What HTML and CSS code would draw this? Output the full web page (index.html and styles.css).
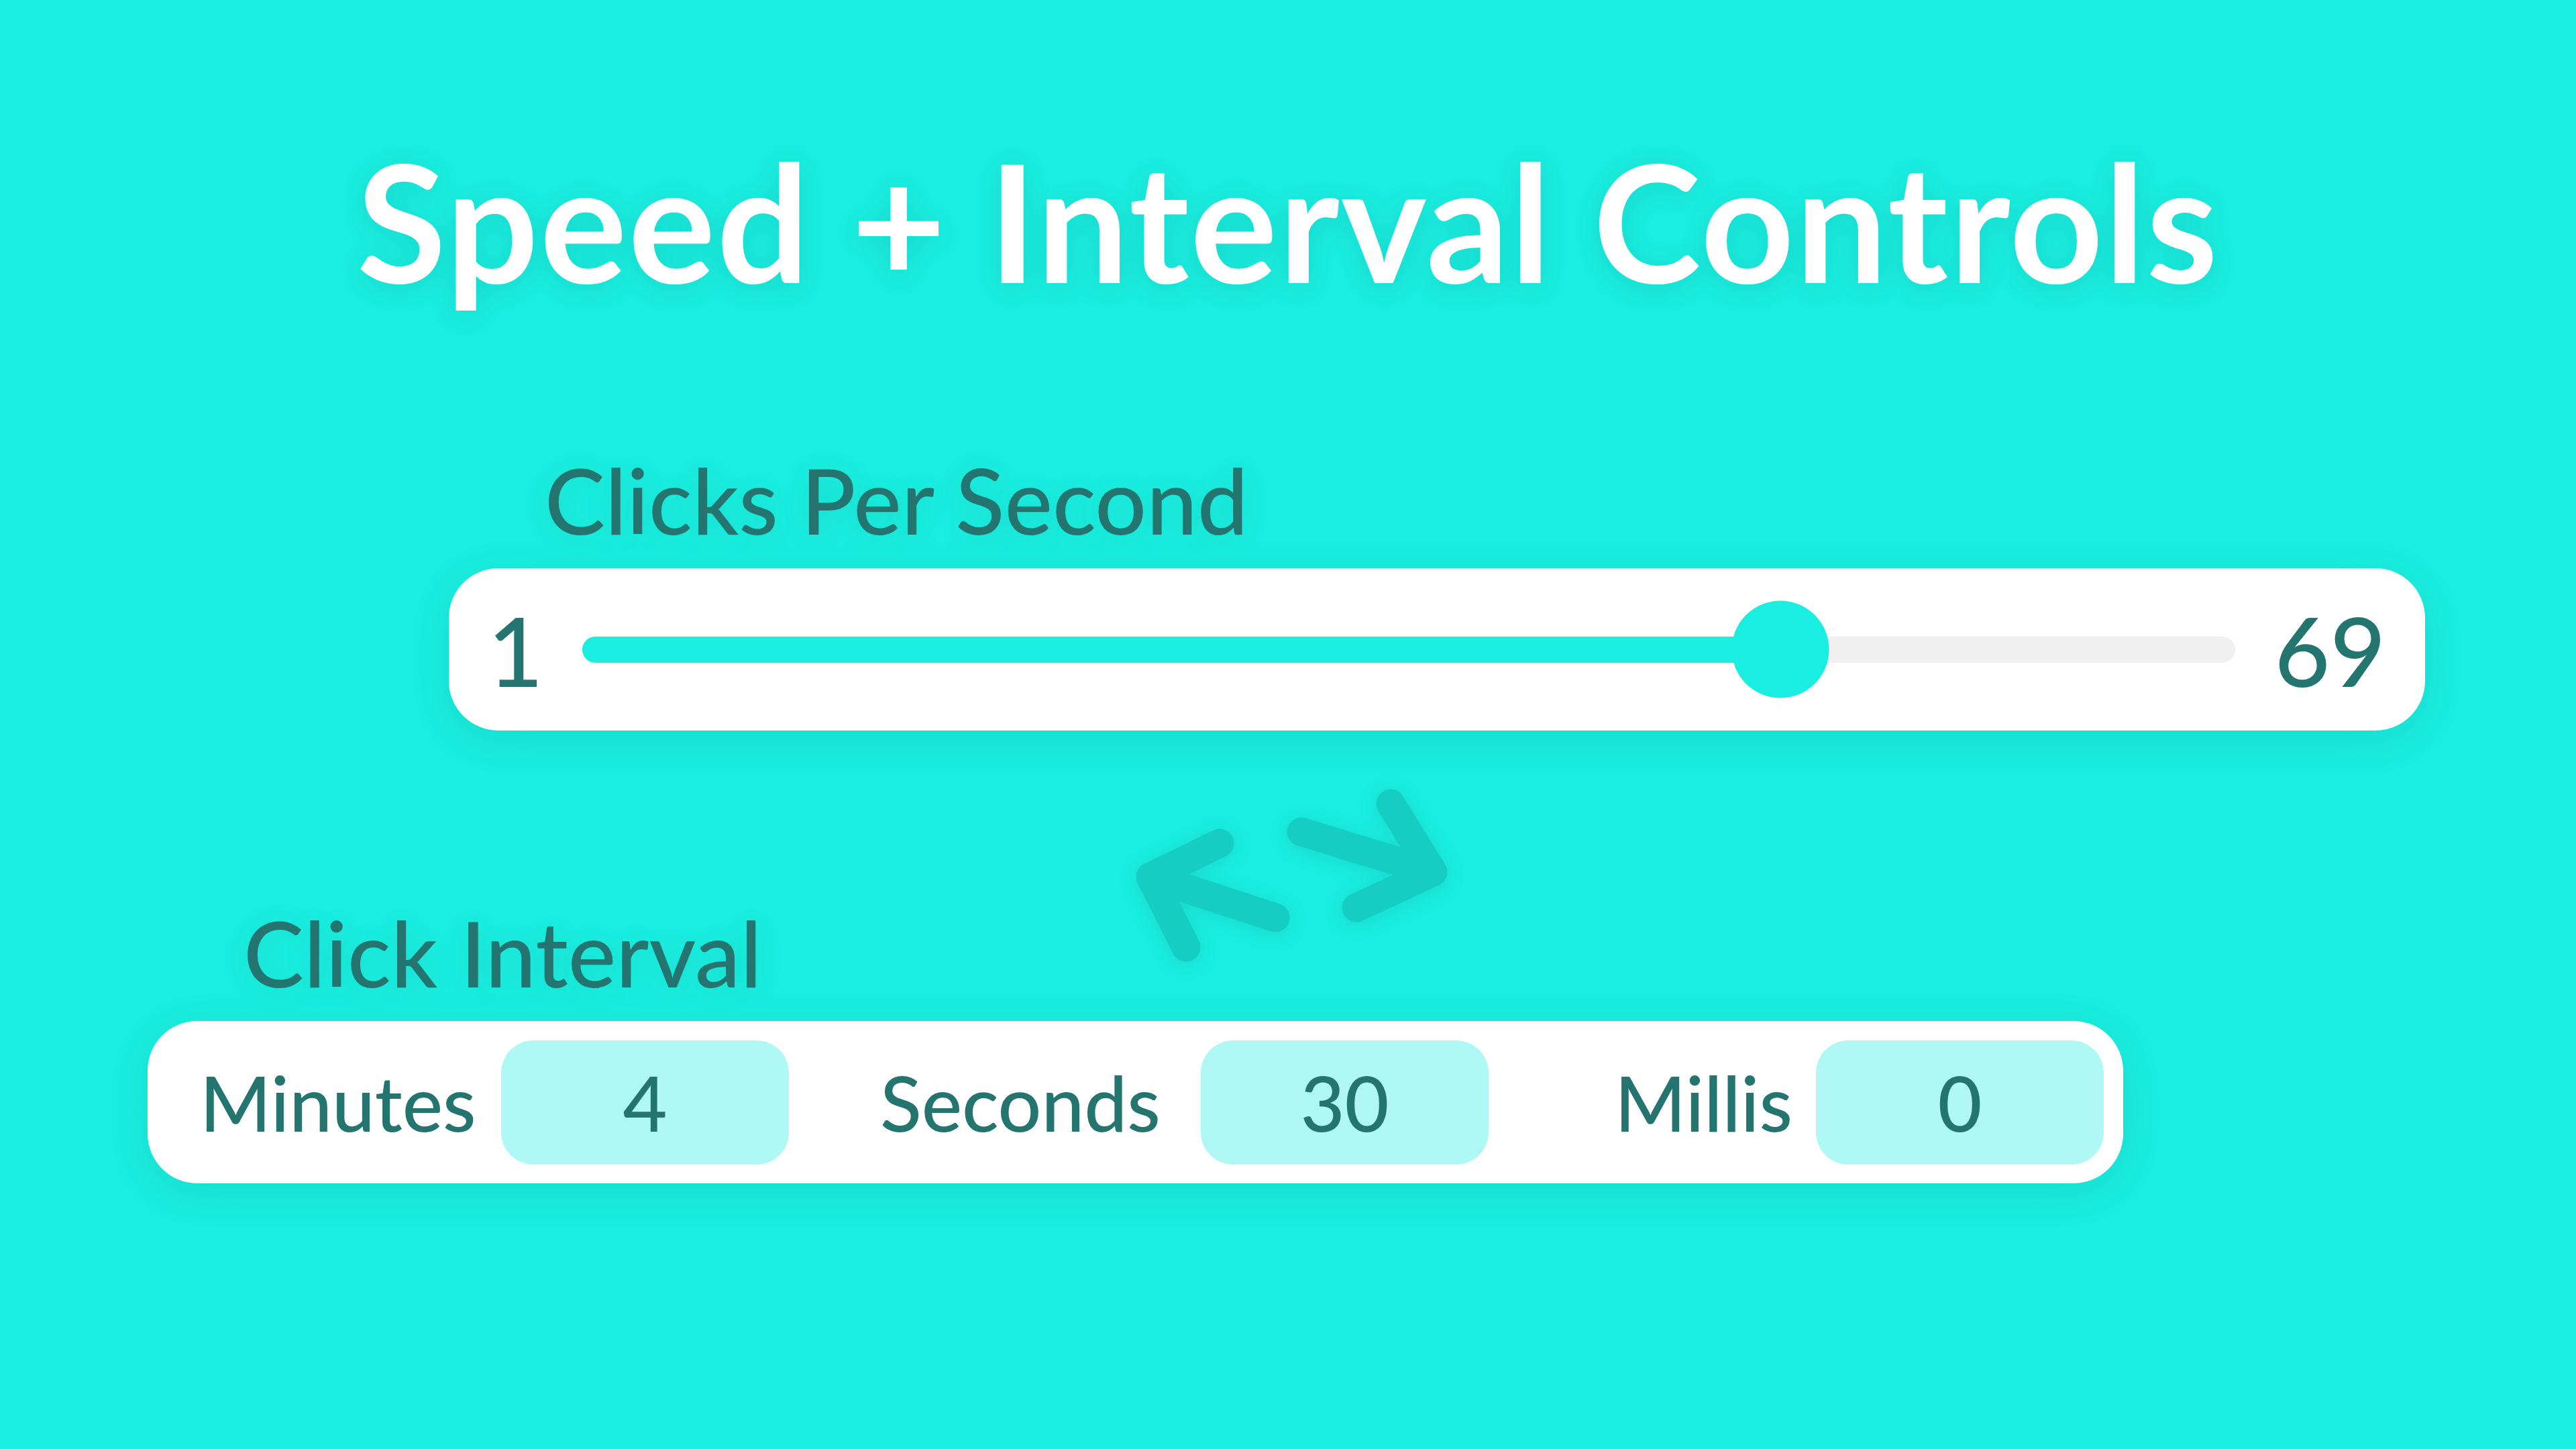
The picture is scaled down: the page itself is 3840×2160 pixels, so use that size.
FILE: index.html
```html
<!DOCTYPE html>
<html lang="en">
<head>
<meta charset="utf-8">
<title>Speed + Interval Controls</title>
<link rel="stylesheet" href="styles.css">
</head>
<body>
<main class="page">
  <h1 class="title">Speed + Interval Controls</h1>

  <section class="section section-speed">
    <h2 class="section-label">Clicks Per Second</h2>
    <div class="card slider-card">
      <span class="slider-num">1</span>
      <div class="track">
        <div class="track-fill" style="width: 72.5%"></div>
        <div class="thumb" style="left: 72.5%"></div>
      </div>
      <span class="slider-num">69</span>
    </div>
  </section>

  <svg class="swap-icon" viewBox="1650 1150 550 320" aria-hidden="true">
    <path d="M1818 1257 L1715 1307 L1768 1412 M1715 1307 L1901 1368" />
    <path d="M2073 1198 L2136 1300 L2022 1353 M1940 1240 L2136 1300" />
  </svg>

  <section class="section section-interval">
    <h2 class="section-label">Click Interval</h2>
    <div class="card interval-card">
      <span class="field-label field-minutes">Minutes</span>
      <span class="field-value">4</span>
      <span class="field-label field-seconds">Seconds</span>
      <span class="field-value">30</span>
      <span class="field-label field-millis">Millis</span>
      <span class="field-value">0</span>
    </div>
  </section>
</main>
</body>
</html>
```

FILE: styles.css
```css
html, body {
  margin: 0;
  padding: 0;
}

body {
  width: 3840px;
  height: 2160px;
  background: #1aeee0;
  font-family: "Lato", "Liberation Sans", sans-serif;
  color: #24756f;
  overflow: hidden;
}

.page {
  position: relative;
  width: 3840px;
  height: 2160px;
  padding-top: 207px;
  box-sizing: border-box;
}

.title {
  margin: 0;
  text-align: center;
  font-size: 243px;
  line-height: 1;
  font-weight: 700;
  letter-spacing: 2px;
  color: #ffffff;
  text-shadow: 0 6px 40px rgba(0, 80, 80, 0.14);
}

.section-label {
  margin: 0;
  padding-left: 143px;
  font-size: 135px;
  line-height: 1;
  font-weight: 500;
  color: #24756f;
  text-shadow: 0 6px 40px rgba(0, 80, 80, 0.12);
}

.section-speed {
  margin-top: 228px;
  margin-left: 669px;
  width: 2946px;
}

.section-interval {
  margin-top: 264px;
  margin-left: 220px;
  width: 2945px;
}

.card {
  margin-top: 34px;
  height: 242px;
  background: #ffffff;
  border-radius: 74px;
  box-shadow: 0 12px 60px rgba(0, 80, 80, 0.12);
  box-sizing: border-box;
}

.slider-card {
  display: grid;
  grid-template-columns: 199px 1fr 283px;
  align-items: center;
}

.slider-num {
  text-align: center;
  font-size: 143px;
  line-height: 1;
  font-weight: 500;
}

.track {
  position: relative;
  height: 39px;
  border-radius: 20px;
  background: #f0f0f0;
}

.track-fill {
  height: 100%;
  border-radius: 20px 0 0 20px;
  background: #1aeee0;
}

.thumb {
  position: absolute;
  top: 50%;
  width: 145px;
  height: 145px;
  border-radius: 50%;
  background: #1aeee0;
  transform: translate(-50%, -50%);
}

.swap-icon {
  position: absolute;
  left: 1650px;
  top: 1150px;
  width: 550px;
  height: 320px;
  fill: none;
  stroke: #15cdc3;
  stroke-width: 43;
  stroke-linecap: round;
  stroke-linejoin: round;
  filter: drop-shadow(0 4px 14px rgba(0, 80, 80, 0.12));
}

.interval-card {
  display: flex;
  align-items: center;
  padding: 29px 30px 29px 78px;
}

.field-label {
  flex: none;
  font-size: 114px;
  line-height: 1;
  font-weight: 500;
}

.field-minutes {
  width: 449px;
}

.field-seconds {
  width: 478px;
  margin-left: 136px;
}

.field-millis {
  width: 300px;
  margin-left: 188px;
}

.field-value {
  flex: none;
  width: 429px;
  height: 185px;
  display: flex;
  align-items: center;
  justify-content: center;
  border-radius: 48px;
  background: #aff8f3;
  font-size: 114px;
  line-height: 1;
  font-weight: 500;
}
```
